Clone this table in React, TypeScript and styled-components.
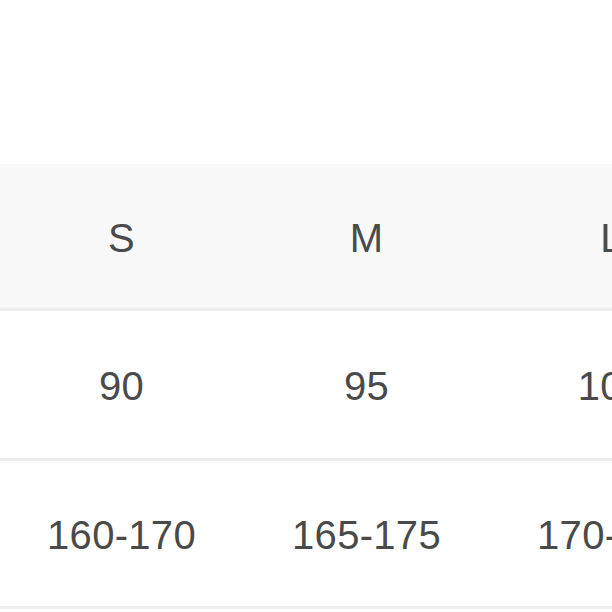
import React from "react";
import styled, { createGlobalStyle } from "styled-components";

const Global = createGlobalStyle`
  html, body { margin: 0; padding: 0; background: #fff; overflow: hidden; }
  body { font-family: "Liberation Sans", Arial, sans-serif; }
`;

const Page = styled.div`
  width: 612px;
  height: 612px;
  overflow: hidden;
  padding-top: 164px;
  box-sizing: border-box;
`;

const Table = styled.div`
  display: flex;
  flex-direction: column;
  width: 980px;
  margin-left: -1px;
`;

const Row = styled.div<{ $head?: boolean; $h: number }>`
  display: grid;
  grid-template-columns: repeat(4, 245px);
  height: ${(p) => p.$h}px;
  background: ${(p) => (p.$head ? "#f8f8f8" : "#fff")};
  border-bottom: 3px solid #eeeeee;
`;

const Cell = styled.div`
  display: flex;
  align-items: center;
  justify-content: center;
  padding-top: 4px;
  font-size: 40px;
  color: #4a4a4a;
  letter-spacing: 0.3px;
`;

const rows = [
  { head: true, h: 144, cells: ["S", "M", "L", "XL"] },
  { head: false, h: 147, cells: ["90", "95", "100", "105"] },
  { head: false, h: 145, cells: ["160-170", "165-175", "170-180", "175-185"] },
];

export default function App() {
  return (
    <Page>
      <Global />
      <Table>
        {rows.map((r, i) => (
          <Row key={i} $head={r.head} $h={r.h}>
            {r.cells.map((c) => (
              <Cell key={c}>{c}</Cell>
            ))}
          </Row>
        ))}
      </Table>
    </Page>
  );
}
